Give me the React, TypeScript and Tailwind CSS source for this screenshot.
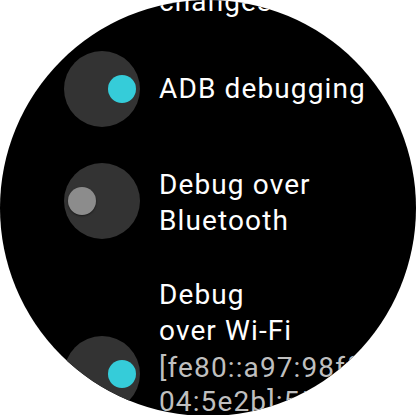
import React from "react";

interface ToggleProps {
  on: boolean;
}

const Toggle: React.FC<ToggleProps> = ({ on }) => (
  <div
    className={`flex h-[76px] w-[76px] shrink-0 items-center rounded-full bg-[#333333] ${
      on ? "justify-end pr-[4px]" : "justify-start pl-[4px]"
    }`}
  >
    <div
      className={`h-[28px] w-[28px] rounded-full ${
        on ? "bg-[#35ccd9]" : "bg-[#8c8c8c] shadow-[0_1px_2px_rgba(0,0,0,0.5)]"
      }`}
    />
  </div>
);

export default function App() {
  return (
    <div className="h-[415px] w-[416px] overflow-hidden bg-white">
      <div
        className="flex h-[416px] w-[416px] flex-col overflow-hidden rounded-full bg-black text-[28px] leading-[36px] tracking-[0.04em] text-white"
        style={{ fontFamily: "Roboto, 'Noto Sans', sans-serif" }}
      >
        <div className="mt-[-16px] whitespace-nowrap pl-[159px]">changes</div>

        <div className="mt-[31px] flex items-center gap-[19px] pl-[64px]">
          <Toggle on={true} />
          <div className="whitespace-nowrap">ADB debugging</div>
        </div>

        <div className="mt-[36px] flex items-center gap-[19px] pl-[64px]">
          <Toggle on={false} />
          <div className="whitespace-nowrap pt-[3px]">
            <div>Debug over</div>
            <div>Bluetooth</div>
          </div>
        </div>

        <div className="mt-[38px] flex items-start gap-[19px] pl-[64px]">
          <div className="mt-[59px]">
            <Toggle on={true} />
          </div>
          <div className="whitespace-nowrap">
            <div>Debug</div>
            <div>over Wi-Fi</div>
            <div className="mt-[2px] leading-[34px] text-[#bfbfbf]">
              <div>[fe80::a97:98ff:fe3c:</div>
              <div>04:5e2b]:5555</div>
            </div>
          </div>
        </div>
      </div>
    </div>
  );
}
